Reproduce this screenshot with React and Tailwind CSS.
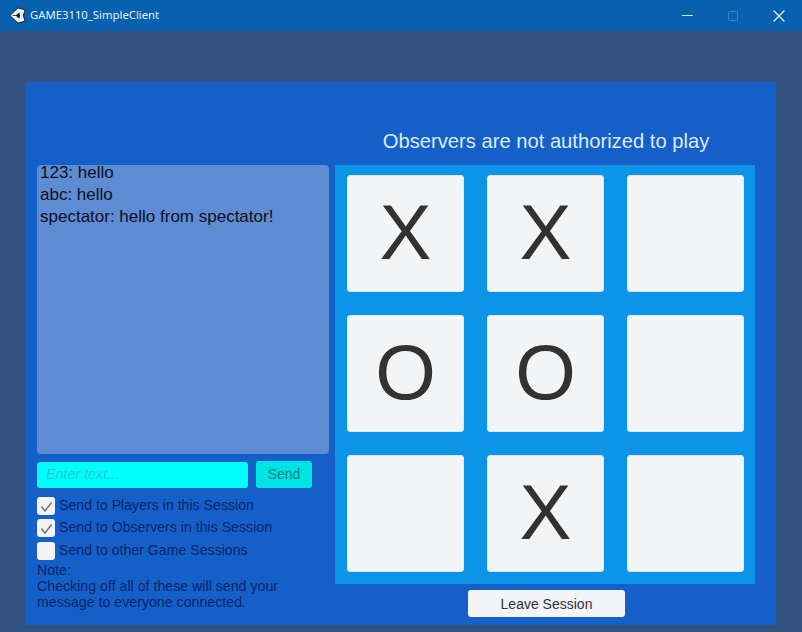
import { Minus, Square, X } from "lucide-react";

const font = "font-['Liberation_Sans',Arial,sans-serif]";

const board = ["X", "X", "", "O", "O", "", "", "X", ""];

const options = [
    { label: "Send to Players in this Session", checked: true, gap: "mb-[4px]" },
    { label: "Send to Observers in this Session", checked: true, gap: "mb-[5px]" },
    { label: "Send to other Game Sessions", checked: false, gap: "mb-[2px]" },
];

const UnityLogo = () => (
    <svg width="17" height="17" viewBox="0 0 18 18">
        <path d="M9.5 1 L17 3 L15.2 9 L17 15 L9.5 17 L1 9 Z" fill="#f4f7fa" stroke="#0b2036" strokeWidth="1" strokeLinejoin="round" />
        <path d="M7 9 L10.8 5.6 L11.8 9 L10.8 12.4 Z" fill="#0b2036" />
        <path d="M7.5 9 H3.6" stroke="#0b2036" strokeWidth="0.8" />
    </svg>
);

const Checkbox = ({ checked, label, gap }) => (
    <div className={`flex items-center h-[18px] ${gap}`}>
        <div className="w-[18px] h-[18px] rounded-[3px] bg-[#f3f4f7] flex items-center justify-center shrink-0">
            {checked && (
                <svg width="13" height="13" viewBox="0 0 13 13" fill="none">
                    <path d="M1.5 6.5 L5 11 L11.5 2.5" stroke="#77736a" strokeWidth="1.4" />
                </svg>
            )}
        </div>
        <span className="ml-[4px] text-[14.15px] text-[#0a2468]">{label}</span>
    </div>
);

const Cell = ({ value }) => (
    <div className="w-[117px] h-[117px] pb-[3px] rounded-[3px] bg-[#f3f4f6] border border-[#dfe6ee] flex items-center justify-center text-[#323232] text-[78px] leading-none">
        {value}
    </div>
);

const App = () => {
    return (
        <div className={`${font} w-[802px] h-[632px] overflow-hidden bg-[#34527f] flex flex-col`}>
            <div className="h-[31px] bg-[#0860ae] flex items-center shrink-0">
                <div className="ml-[9px] mr-[4px] flex items-center">
                    <UnityLogo />
                </div>
                <span className="text-[11.3px] text-[#e4f1fb] font-['Noto_Sans',sans-serif]">GAME3110_SimpleClient</span>
                <div className="ml-auto flex items-center">
                    <div className="w-[46px] flex justify-center">
                        <Minus size={17} strokeWidth={1.3} className="text-[#e4f1fb]" />
                    </div>
                    <div className="w-[46px] flex justify-center">
                        <Square size={12} strokeWidth={1.8} className="text-[#3f87c9]" />
                    </div>
                    <div className="w-[46px] flex justify-center">
                        <X size={20} strokeWidth={1.5} className="text-[#e4f1fb]" />
                    </div>
                </div>
            </div>
            <div className="pt-[51px] pl-[25px]">
                <div className="w-[751px] h-[543px] bg-[#1560c8] flex pl-[12px]">
                    <div className="w-[292px] pt-[83px]">
                        <div className="h-[289px] rounded-[4px] bg-[#5f8bd2] pl-[3px] text-[17px] leading-[22px] text-[#0b1020]">
                            <div className="leading-[15px]">123: hello</div>
                            <div className="mt-[4px]">abc: hello</div>
                            <div>spectator: hello from spectator!</div>
                        </div>
                        <div className="flex items-center mt-[7px] h-[27px]">
                            <div className="w-[211px] h-[26px] rounded-[3px] bg-[#00ffff] pl-[9px] flex items-center italic text-[14.3px] text-[#22cbd0]">
                                Enter text...
                            </div>
                            <div className="ml-[8px] w-[56px] h-[27px] rounded-[3px] bg-[#00e3e3] flex items-center justify-center text-[14px] text-[#058083]">
                                Send
                            </div>
                        </div>
                        <div className="mt-[9px]">
                            {options.map(o => <Checkbox key={o.label} checked={o.checked} label={o.label} gap={o.gap} />)}
                        </div>
                        <div className="text-[14.2px] leading-[16px] text-[#0a2468]">
                            <div>Note:</div>
                            <div>Checking off all of these will send your</div>
                            <div>message to everyone connected.</div>
                        </div>
                    </div>
                    <div className="ml-[6px] w-[420px]">
                        <div className="h-[83px] flex items-end justify-center pb-[12px] pl-[2px] text-[20.2px] leading-[24px] text-[#dcebfb]">
                            Observers are not authorized to play
                        </div>
                        <div className="h-[419px] bg-[#0c95e6] pt-[10px] pl-[12px] grid grid-cols-[117px_117px_117px] grid-rows-[117px_117px_117px] gap-x-[23px] gap-y-[23px]">
                            {board.map((v, i) => <Cell key={i} value={v} />)}
                        </div>
                        <div className="flex justify-center mt-[6px] pl-[3px]">
                            <div className="w-[157px] h-[27px] pt-[1px] rounded-[3px] bg-[#f3f4f6] flex items-center justify-center text-[14px] text-[#323232]">
                                Leave Session
                            </div>
                        </div>
                    </div>
                </div>
            </div>
        </div>
    )
}

export default App;
